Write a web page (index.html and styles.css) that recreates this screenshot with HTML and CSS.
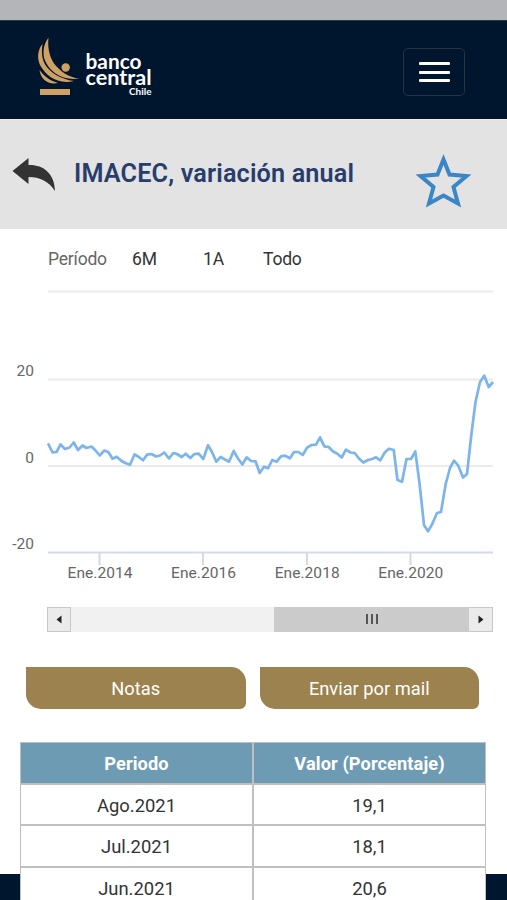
FILE: index.html
```html
<!DOCTYPE html>
<html lang="es">
<head>
<meta charset="utf-8">
<title>IMACEC, variación anual</title>
<link rel="stylesheet" href="styles.css">
</head>
<body>
<div class="status"></div>
<header class="header">
  <svg class="logo" width="130" height="70" viewBox="32 32 130 70">
    <g class="gold">
      <path d="M48.500 37.500C43 45 42.500 54 45 60.500C50 72 62 81 79.500 78.500C68 77.500 60 71 54 63.500C49 56 47.500 46 48.500 37.500Z"/>
      <path d="M42.500 44C37.500 50 37 58 40 65C46 76 58 85 74 81C61 79.500 49 72 44.500 63.500C41.500 57 41.500 50 42.500 44Z"/>
      <path d="M39.500 70C40.500 79 48 85 58 83C50 80.500 45 77 39.500 70Z"/>
      <circle cx="65.700" cy="67.500" r="4.200"/>
      <rect x="40" y="89" width="30" height="6"/>
    </g>
    <g class="brand">
      <text x="85.500" y="69.300" textLength="56" lengthAdjust="spacingAndGlyphs">banco</text>
      <text x="85.500" y="84.500" textLength="66" lengthAdjust="spacingAndGlyphs">central</text>
      <text class="country" x="129" y="95" textLength="22.500" lengthAdjust="spacingAndGlyphs">Chile</text>
    </g>
  </svg>
  <div class="menu"><i></i><i></i><i></i></div>
</header>
<section class="titlebar">
  <svg class="back" width="44" height="36" viewBox="12 156 44 36"><path d="M12.500 171L28.500 158V165C43 164.500 54.500 173 55 191C49 181.500 40 177 28.500 177V184Z"/></svg>
  <h1>IMACEC, variación anual</h1>
  <svg class="star" width="58" height="56" viewBox="414 153 58 56"><path d="M443.500 159.500L449.500 174.500L466.500 176L453.500 187L458 203.500L443.500 195.500L429 203.500L433.500 187L420.500 176L437.500 174.500Z"/></svg>
</section>
<main class="content">
  <nav class="periods"><span class="label">Período</span><span class="six">6M</span><span class="year">1A</span><span>Todo</span></nav>
  <svg class="chart" width="507" height="310" viewBox="0 285 507 310">
    <path class="grid" d="M48 291.500H493M48 379.500H493M48 466H493"/>
    <path class="axis" d="M48 552.500H493M99.500 552V565M203 552V565M307 552V565M410.500 552V565"/>
    <polyline class="series" points="48,443.300 52.500,452.500 56.500,452 60.500,444.500 65,449 69.500,447.500 73.700,442.500 78,450 82.500,445.500 86.500,448 91.500,446.500 95.500,450.500 99.700,455.500 104.300,450.500 108.300,452 112.500,458.700 116.700,456.700 121.500,461 126,463.300 130,464.700 134.500,454.500 138.500,456.700 143,460.300 147,454.700 151.500,454 156,456.500 160,455.500 164.300,452.500 169,458.500 173.300,453 177,454 181.700,457 185.700,453.700 190.300,458 194.500,454 198.700,453.700 203.300,459 208,445.300 212,452 216.300,461.700 220.700,457 225,459.500 229,461.700 233.700,451 238,458.500 242.300,464.500 246.700,457.300 251,461 255.500,461.300 259.700,473 264,466.700 268,468.300 272.300,460 276.700,461.700 281,456.300 285,455.700 290,458.300 294,452 298.300,452 302.700,455 307,447.700 311.500,445 316,444.700 320,437.300 324.300,446.300 328.700,447 333,451.500 337,453.500 341.700,457.500 346,449.700 350.500,452.500 354.700,453 359,458.500 363.300,462.500 368,460 372,459 376,457.300 380.300,460.300 384.700,452.500 389,448.700 393.700,450 397.500,480 402,481.700 406.500,459 411,459 415.300,451.500 419.500,483 424,525 428,531.300 432.500,523.500 437,513 441,512 445.700,484 450,468 454,460.700 458.300,465.700 463,477.500 467,474 471.300,435 475.500,402 480,382 484.300,375.700 488.700,387 493,382"/>
    <g class="ticks end">
      <text x="34" y="376">20</text><text x="34" y="462.500">0</text><text x="34" y="549">-20</text>
    </g>
    <g class="ticks mid">
      <text x="100" y="578">Ene.2014</text><text x="203.500" y="578">Ene.2016</text><text x="307.200" y="578">Ene.2018</text><text x="410.800" y="578">Ene.2020</text>
    </g>
  </svg>
  <div class="scroll">
    <div class="arrow"><svg width="6" height="9"><path d="M5.500 .5V8.500L.5 4.500Z"/></svg></div>
    <div class="track"><div class="thumb"><i></i><i></i><i></i></div></div>
    <div class="arrow right"><svg width="6" height="9"><path d="M.5 .5V8.500L5.500 4.500Z"/></svg></div>
  </div>
  <div class="actions"><div class="button">Notas</div><div class="button">Enviar por mail</div></div>
  <div class="table">
    <div class="cell head">Periodo</div><div class="cell head">Valor (Porcentaje)</div>
    <div class="cell">Ago.2021</div><div class="cell">19,1</div>
    <div class="cell">Jul.2021</div><div class="cell">18,1</div>
    <div class="cell">Jun.2021</div><div class="cell">20,6</div>
  </div>
</main>
</body>
</html>
```
FILE: styles.css
```css
* { box-sizing: border-box; }
html { height: 900px; overflow: hidden; background: #00152e; }
body { margin: 0; width: 507px; height: 900px; overflow: hidden; font-family: Roboto, "Liberation Sans", sans-serif; color: #333; }
svg { display: block; }
.status { height: 20px; background: #b4b5b9; }
.header { height: 99px; background: #00152e; border-top: 1px solid #26383f; display: flex; justify-content: space-between; padding: 11px 42px 0 32px; }
.gold { fill: #d0a164; }
.brand { fill: #fff; font: 700 20px Lato, sans-serif; }
.country { font-size: 9px; }
.menu { width: 62px; height: 48px; margin-top: 16px; border: 1px solid #27333d; border-radius: 5px; display: flex; flex-direction: column; align-items: center; justify-content: center; gap: 5.500px; }
.menu i { width: 31px; height: 3px; border-radius: 1px; background: #fff; }
.titlebar { height: 110px; background: #e3e3e3; display: flex; padding-left: 12px; border-top: 1px solid #eee; }
.back { margin-top: 36px; fill: #333; flex: none; }
h1 { margin: 38px 0 0 18px; width: 340px; font-size: 25.200px; line-height: 32px; font-weight: 600; letter-spacing: .16px; color: #293d6d; white-space: nowrap; }
.star { margin-top: 33px; fill: none; stroke: #3b86c6; stroke-width: 4; flex: none; }
.content { height: 645px; background: #fff; }
.periods { height: 56px; padding: 18px 0 0 48px; display: flex; font-size: 17.500px; line-height: 25px; letter-spacing: -.2px; }
.periods span { white-space: nowrap; }
.label { width: 84px; color: #666; }
.six { width: 71px; }
.year { width: 60px; }
.grid { stroke: #ebebeb; stroke-width: 2; }
.axis { stroke: #d3d9e5; stroke-width: 2; }
.series { fill: none; stroke: #7cb5ec; stroke-width: 2.700; stroke-linejoin: round; }
.ticks { fill: #666; font-size: 15.500px; letter-spacing: .05px; }
.end { text-anchor: end; }
.mid { text-anchor: middle; }
.scroll { margin: 12px 14px 0 47px; height: 25px; display: flex; }
.arrow { width: 24px; border: 1px solid #c8c8c8; background: #ebebeb; display: flex; align-items: center; justify-content: center; fill: #222; }
.arrow.right { border-width: 1px 1px 1px 0; }
.track { flex: 1; background: #f1f1f1; padding-left: 203px; }
.thumb { height: 25px; background: #cbcbcb; display: flex; gap: 3px; justify-content: center; padding-top: 7px; }
.thumb i { width: 2px; height: 10px; background: #555; }
.actions { margin: 35px 28px 0 26px; display: flex; gap: 14px; }
.button { flex: 1; height: 42px; border-radius: 0 15px 6px 15px; background: #9b824e; color: #fff; font-size: 18.300px; line-height: 44px; letter-spacing: 0; text-align: center; }
.table { margin: 33px 21px 0 20px; width: 466px; border: 1px solid #bfbfbf; background: #c0c0c0; display: grid; grid-template-columns: 231px 231px; grid-auto-rows: 39.500px; gap: 2.200px 2px; }
.cell { background: #fff; color: #333; font-size: 18.400px; line-height: 41.500px; text-align: center; letter-spacing: 0; }
.head { background: #6e9bb4; color: #fff; font-weight: 700; font-size: 18.200px; letter-spacing: .1px; }
```
